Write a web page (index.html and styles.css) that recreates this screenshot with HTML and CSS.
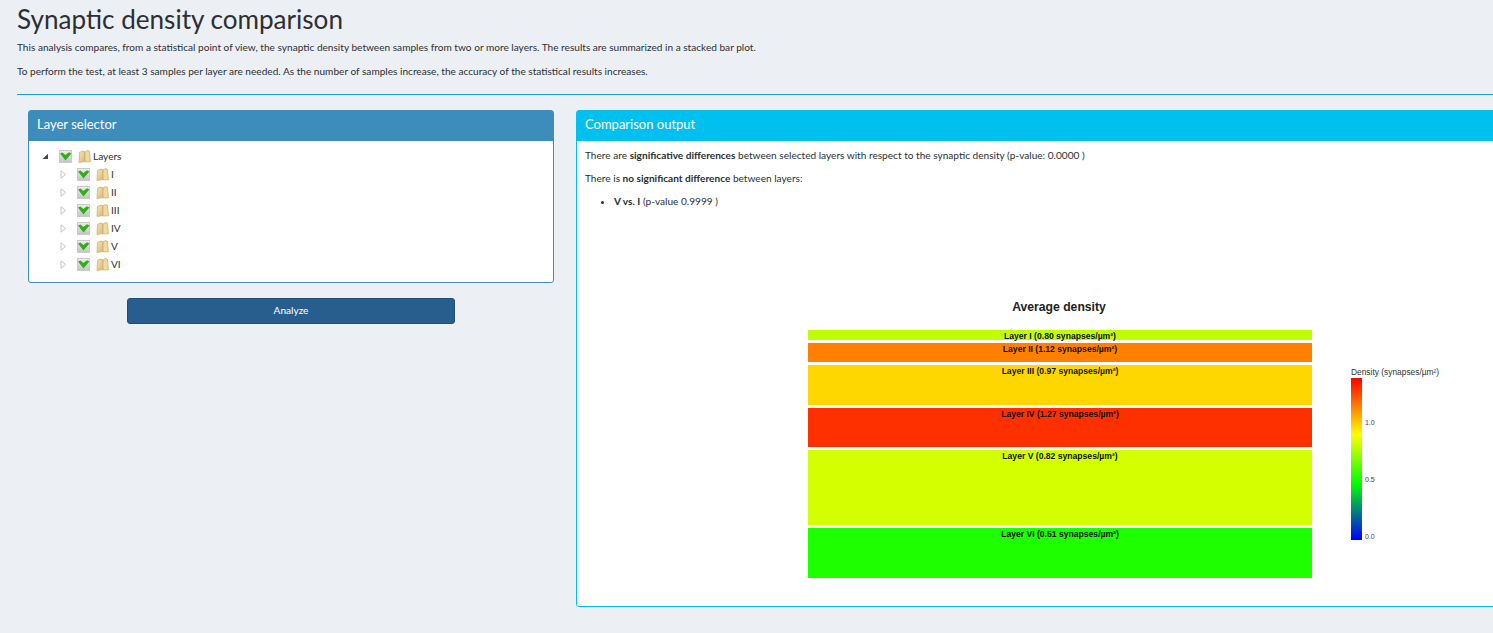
FILE: index.html
```html
<!DOCTYPE html>
<html lang="en">
<head>
    <meta charset="utf-8" />
    <title>Synaptic density comparison</title>
    <link rel="stylesheet" href="styles.css">
</head>
<body>
    <svg class="iconDefs" width="0" height="0">
        <defs>
            <linearGradient id="checkFill" x1="0" y1="0" x2="0" y2="1">
                <stop offset="0" stop-color="#eceeea" />
                <stop offset="1" stop-color="#c2c5c0" />
            </linearGradient>
            <linearGradient id="folderFill" x1="0" y1="0" x2="1" y2="1">
                <stop offset="0" stop-color="#f6e5bb" />
                <stop offset="1" stop-color="#d8b874" />
            </linearGradient>
            <symbol id="iconCheck" viewBox="0 0 13 13">
                <rect x="0.5" y="0.5" width="12" height="12" fill="url(#checkFill)" stroke="#c8cbc6" />
                <path d="M1 3.6 L3.4 2.6 L6.4 5 L10 2.2 L12.4 3.4 L6.5 10.4 Z" fill="#34ad1c" />
            </symbol>
            <symbol id="iconFolder" viewBox="0 0 13 13">
                <path d="M1.5 2.4 L5 1 L7 2 L7 11.6 L1 12.4 Z" fill="url(#folderFill)" stroke="#cfae68" stroke-width="0.8" />
                <path d="M7 2 L9.4 0.6 L11.4 1.2 L12.4 11.8 L7 11.8 Z" fill="#f0d9a2" stroke="#cfae68" stroke-width="0.8" />
            </symbol>
            <symbol id="iconOpen" viewBox="0 0 7 7">
                <path d="M0.5 6 L6 6 L6 0.8 Z" fill="#444" />
            </symbol>
            <symbol id="iconClosed" viewBox="0 0 7 9">
                <path d="M1 0.8 L5.6 4.5 L1 8.2 Z" fill="#fff" stroke="#c2c5c9" />
            </symbol>
        </defs>
    </svg>

    <main class="page">
        <h1>Synaptic density comparison</h1>
        <p class="intro">This analysis compares, from a statistical point of view, the synaptic density between samples from two or more layers. The results are summarized in a stacked bar plot.</p>
        <p class="intro">To perform the test, at least 3 samples per layer are needed. As the number of samples increase, the accuracy of the statistical results increases.</p>
        <hr />

        <div class="columns">
            <div class="selectorColumn">
                <section class="box boxPrimary">
                    <h2 class="boxHeader">Layer selector</h2>
                    <div class="treeBody">
                        <div class="treeRow">
                            <svg class="arrow arrowOpen"><use href="#iconOpen" /></svg>
                            <svg class="check"><use href="#iconCheck" /></svg>
                            <svg class="folder"><use href="#iconFolder" /></svg>
                            <span>Layers</span>
                        </div>
                        <ul class="tree">
                            <li class="treeRow">
                                <svg class="arrow arrowClosed"><use href="#iconClosed" /></svg>
                                <svg class="check"><use href="#iconCheck" /></svg>
                                <svg class="folder"><use href="#iconFolder" /></svg>
                                <span>I</span>
                            </li>
                            <li class="treeRow">
                                <svg class="arrow arrowClosed"><use href="#iconClosed" /></svg>
                                <svg class="check"><use href="#iconCheck" /></svg>
                                <svg class="folder"><use href="#iconFolder" /></svg>
                                <span>II</span>
                            </li>
                            <li class="treeRow">
                                <svg class="arrow arrowClosed"><use href="#iconClosed" /></svg>
                                <svg class="check"><use href="#iconCheck" /></svg>
                                <svg class="folder"><use href="#iconFolder" /></svg>
                                <span>III</span>
                            </li>
                            <li class="treeRow">
                                <svg class="arrow arrowClosed"><use href="#iconClosed" /></svg>
                                <svg class="check"><use href="#iconCheck" /></svg>
                                <svg class="folder"><use href="#iconFolder" /></svg>
                                <span>IV</span>
                            </li>
                            <li class="treeRow">
                                <svg class="arrow arrowClosed"><use href="#iconClosed" /></svg>
                                <svg class="check"><use href="#iconCheck" /></svg>
                                <svg class="folder"><use href="#iconFolder" /></svg>
                                <span>V</span>
                            </li>
                            <li class="treeRow">
                                <svg class="arrow arrowClosed"><use href="#iconClosed" /></svg>
                                <svg class="check"><use href="#iconCheck" /></svg>
                                <svg class="folder"><use href="#iconFolder" /></svg>
                                <span>VI</span>
                            </li>
                        </ul>
                    </div>
                </section>
                <button class="analyzeButton" type="button">Analyze</button>
            </div>

            <section class="box boxInfo">
                <h2 class="boxHeader">Comparison output</h2>
                <div class="outputBody">
                    <p>There are <b>significative differences</b> between selected layers with respect to the synaptic density (p-value: 0.0000 )</p>
                    <p>There is <b>no significant difference</b> between layers:</p>
                    <ul class="pairs">
                        <li><b>V vs. I</b> (p-value 0.9999 )</li>
                    </ul>

                    <svg class="plot" width="917" height="290" viewBox="0 0 917 290">
                        <defs>
                            <linearGradient id="densityScale" x1="0" y1="0" x2="0" y2="1">
                                <stop offset="0" stop-color="#ff0000" />
                                <stop offset="0.35" stop-color="#ffff00" />
                                <stop offset="0.65" stop-color="#00ff00" />
                                <stop offset="1" stop-color="#0000ff" />
                            </linearGradient>
                        </defs>

                        <text class="plotTitle" x="474" y="12">Average density</text>

                        <rect x="223" y="31" width="504" height="10" fill="#c0ff00" />
                        <rect x="223" y="44" width="504" height="19" fill="#ff8000" />
                        <rect x="223" y="66" width="504" height="40" fill="#ffd700" />
                        <rect x="223" y="109" width="504" height="39" fill="#ff3000" />
                        <rect x="223" y="151" width="504" height="75" fill="#d4ff00" />
                        <rect x="223" y="229" width="504" height="50" fill="#1eff00" />

                        <text class="barLabel" x="475" y="40">Layer I (0.80 synapses/µm²)</text>
                        <text class="barLabel" x="475" y="53">Layer II (1.12 synapses/µm²)</text>
                        <text class="barLabel" x="475" y="75">Layer III (0.97 synapses/µm²)</text>
                        <text class="barLabel" x="475" y="118">Layer IV (1.27 synapses/µm²)</text>
                        <text class="barLabel" x="475" y="160">Layer V (0.82 synapses/µm²)</text>
                        <text class="barLabel" x="475" y="238">Layer VI (0.51 synapses/µm²)</text>

                        <text class="legendTitle" x="766" y="76">Density (synapses/µm²)</text>
                        <rect x="766" y="79" width="11" height="162" fill="url(#densityScale)" />
                        <text class="legendTick" x="780" y="126">1.0</text>
                        <text class="legendTick" x="780" y="183">0.5</text>
                        <text class="legendTick" x="780" y="240">0.0</text>
                    </svg>
                </div>
            </section>
        </div>
    </main>
</body>
</html>
```

FILE: styles.css
```css
html, body {
    margin: 0;
    padding: 0;
    height: 100%;
    overflow: hidden;
}

body {
    background-color: #ecf0f5;
    color: #2b2f33;
    font-family: "Lato", "Open Sans", sans-serif;
    font-size: 10.1px;
}

.iconDefs {
    display: block;
    height: 0;
}

.page {
    width: 1560px;
    padding: 0 0 0 17px;
}

h1 {
    margin: 0;
    padding-top: 2px;
    font-size: 26.1px;
    font-weight: 400;
    line-height: 34px;
}

.intro {
    margin: 0 0 6px 0;
    line-height: 16px;
    padding-top: 2px;
}

.page h1 + .intro {
    margin-top: 1px;
}

hr {
    height: 1px;
    margin: 15px 0 15px 0;
    border: 0;
    background-color: #1a9ee6;
}

.columns {
    display: grid;
    grid-template-columns: 526px 1040px;
    gap: 22px;
    padding-left: 11px;
}

.box {
    background-color: #fff;
    border: 1px solid;
    border-radius: 3px;
}

.boxPrimary {
    border-color: #3c8dbc;
}

.boxInfo {
    border-color: #00c0ef;
    height: 497px;
    box-sizing: border-box;
}

.boxHeader {
    margin: 0;
    padding: 0 8px;
    height: 30px;
    line-height: 27px;
    font-size: 13px;
    font-weight: 400;
    color: #fff;
}

.boxPrimary .boxHeader {
    background-color: #3c8dbc;
}

.boxInfo .boxHeader {
    background-color: #00c0ef;
}

.treeBody {
    padding: 6px 0 9px 13px;
}

.tree {
    list-style: none;
    margin: 0;
    padding: 0 0 0 18px;
}

.treeRow {
    display: flex;
    align-items: center;
    height: 18px;
}

.arrow {
    flex: none;
}

.arrowOpen {
    width: 7px;
    height: 7px;
    margin-right: 10px;
}

.arrowClosed {
    width: 7px;
    height: 9px;
    margin-right: 10px;
}

.check {
    flex: none;
    width: 13px;
    height: 13px;
    margin-right: 6px;
}

.folder {
    flex: none;
    width: 13px;
    height: 13px;
    margin-right: 2px;
}

.analyzeButton {
    display: block;
    width: 328px;
    height: 26px;
    margin: 15px 0 0 99px;
    padding: 0 0 2px 0;
    background-color: #285e8e;
    border: 1px solid #1f4e79;
    border-radius: 3px;
    color: #fff;
    font-family: inherit;
    font-size: 10.1px;
}

.outputBody {
    padding: 6px 8px;
}

.outputBody p {
    margin: 0 0 7px 0;
    line-height: 16px;
}

.pairs {
    margin: 0;
    padding-left: 29px;
    line-height: 16px;
}

.plot {
    display: block;
    margin-top: 90px;
}

.plotTitle {
    font-family: "Liberation Sans", sans-serif;
    font-size: 12.2px;
    font-weight: 700;
    fill: #222;
    text-anchor: middle;
}

.barLabel {
    font-family: "Liberation Sans", sans-serif;
    font-size: 8.6px;
    font-weight: 700;
    fill: #111;
    text-anchor: middle;
}

.legendTitle {
    font-family: "Liberation Sans", sans-serif;
    font-size: 8.4px;
    fill: #333;
}

.legendTick {
    font-family: "Liberation Sans", sans-serif;
    font-size: 7px;
    fill: #444;
}
```
